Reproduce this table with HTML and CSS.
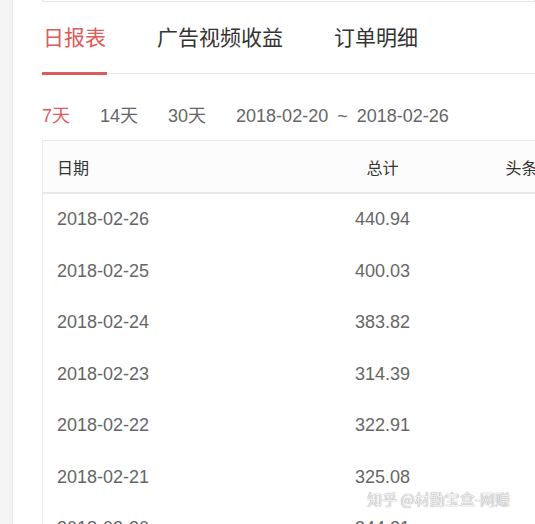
FILE: index.html
```html
<!DOCTYPE html>
<html lang="zh-CN">
<head>
  <meta charset="UTF-8" />
  <title>日报表</title>
  <link rel="stylesheet" href="styles.css">
</head>
<body>

<div class="layout">
  <div class="sidebar"></div>

  <div class="main">
    <div class="prev-card"></div>

    <div class="tabs">
      <div class="tab active">日报表</div>
      <div class="tab">广告视频收益</div>
      <div class="tab">订单明细</div>
    </div>

    <div class="filters">
      <span class="filter active">7天</span>
      <span class="filter">14天</span>
      <span class="filter">30天</span>
      <span class="range">2018-02-20<span class="tilde">~</span>2018-02-26</span>
    </div>

    <table class="report">
      <colgroup>
        <col class="col-date">
        <col class="col-total">
        <col class="col-toutiao">
      </colgroup>
      <thead>
        <tr>
          <th class="cell-date">日期</th>
          <th class="cell-total">总计</th>
          <th class="cell-toutiao">头条收益</th>
        </tr>
      </thead>
      <tbody id="rows"></tbody>
    </table>
  </div>
</div>

<div class="watermark">知乎 @材勤宝盒-网赚</div>

<script>
  const days = [
    { date: "2018-02-26", total: 440.94 },
    { date: "2018-02-25", total: 400.03 },
    { date: "2018-02-24", total: 383.82 },
    { date: "2018-02-23", total: 314.39 },
    { date: "2018-02-22", total: 322.91 },
    { date: "2018-02-21", total: 325.08 },
    { date: "2018-02-20", total: 344.21 }
  ];

  const tbody = document.getElementById("rows");
  days.forEach(day => {
    const tr = document.createElement("tr");
    tr.innerHTML = `<td class="cell-date">${day.date}</td>
      <td class="cell-total">${day.total.toFixed(2)}</td>
      <td class="cell-toutiao"></td>`;
    tbody.appendChild(tr);
  });
</script>

</body>
</html>
```

FILE: styles.css
```css
html, body {
  margin: 0;
  padding: 0;
  height: 100%;
  overflow: hidden;
  background: #fff;
}

body {
  font-family: "Liberation Sans", "Noto Sans CJK SC", sans-serif;
  color: #333;
}

.layout {
  display: flex;
  min-height: 100vh;
}

.sidebar {
  width: 12px;
  flex-shrink: 0;
  background: #f5f5f6;
  border-right: 1px solid #e9e9e9;
}

.main {
  flex: 1;
  min-width: 0;
  padding-left: 29px;
  overflow: hidden;
}

.prev-card {
  height: 1px;
  border: 1px solid #e6e6e6;
  border-top: none;
}

/* tabs */
.tabs {
  display: flex;
  gap: 49px;
  border-bottom: 1px solid #e8e8e8;
}

.tab {
  font-size: 21px;
  line-height: 30px;
  padding: 21px 1px 19px;
  margin-bottom: -2px;
  border-bottom: 3px solid transparent;
  color: #333;
}

.tab.active {
  color: #e05a5a;
  border-bottom-color: #dc5b5b;
}

/* date filters */
.filters {
  display: flex;
  margin-top: 30px;
  font-size: 18px;
  line-height: 24px;
  color: #666;
}

.filter {
  margin-right: 30px;
}

.filter.active {
  color: #e05a5a;
}

.tilde {
  margin: 0 9px;
}

/* table */
.report {
  margin-top: 12px;
  width: 700px;
  table-layout: fixed;
  border-collapse: collapse;
  border-top: 1px solid #e8e8e8;
  border-left: 1px solid #e8e8e8;
}

.col-date { width: 259px; }
.col-total { width: 162px; }
.col-toutiao { width: 279px; }

.report th {
  height: 51px;
  padding: 0;
  font-size: 16px;
  font-weight: normal;
  color: #333;
  background: #fcfcfc;
  border-bottom: 2px solid #e8e8e8;
}

.report td {
  height: 51.5px;
  padding: 0;
  font-size: 18px;
  color: #666;
}

.cell-date {
  text-align: left;
  padding-left: 14px !important;
}

.cell-total {
  text-align: center;
}

.report th.cell-toutiao {
  text-align: left;
  padding-left: 42px;
}

.watermark {
  position: absolute;
  right: 25px;
  bottom: 15px;
  font-family: "Noto Sans CJK SC", sans-serif;
  font-size: 15px;
  color: #f2f2f2;
  text-shadow: 0 0 1px #999, 0 0 1px #aaa;
}
```
